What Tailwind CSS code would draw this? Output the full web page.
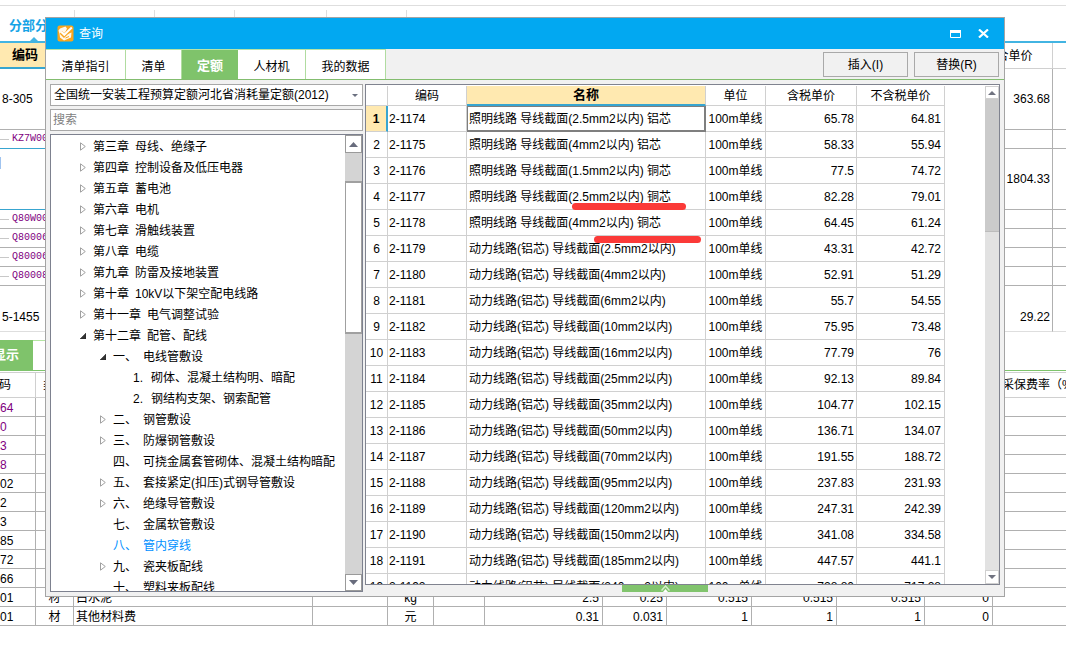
<!DOCTYPE html>
<html lang="zh-CN">
<head>
<meta charset="utf-8">
<meta name="viewport" content="width=device-width, initial-scale=1">
<title>查询</title>
<script src="https://cdn.jsdelivr.net/npm/@tailwindcss/browser@4"></script>
</head>
<body class="relative min-h-screen overflow-hidden bg-white font-['Liberation_Sans','Noto_Sans_CJK_SC',sans-serif] text-[12px] leading-4 text-black">

<!-- Main window: bill of quantities -->
<main class="pt-[5px]">
  <nav class="flex h-[36px] items-start border-t border-[#dedede] pt-1">
    <a href="#" class="relative w-[75px] border-r border-[#dedede] pt-[6px] pb-2 pl-[9px] text-[13px] leading-5 font-bold whitespace-nowrap text-[#14a3e6]">分部分项
      <svg class="absolute top-[27px] left-[30px] h-1 w-2" viewBox="0 0 8 4" aria-hidden="true"><path d="M0 4L4 0L8 4Z" fill="#42b4e2"/></svg>
    </a>
    <span class="h-8 w-20 border-r border-[#dedede]"></span>
    <span class="h-8 w-20 border-r border-[#dedede]"></span>
    <span class="h-8 w-[92px] border-r border-[#dedede]"></span>
    <span class="h-8 w-20 border-r border-[#dedede]"></span>
  </nav>

  <table class="w-full table-fixed border-separate border-spacing-0 border-t-2 border-[#42b4e2]">
    <colgroup><col class="w-[200px]"><col><col class="w-[88px]"><col class="w-[13px]"></colgroup>
    <thead>
      <tr class="h-[26px]">
        <th class="border-b-2 border-[#36a5d0] bg-[#ffe9b0] pl-3 text-left text-[13px] font-bold">编码</th>
        <th class="border-b border-[#d0d0d0]"></th>
        <th class="border-r border-b border-[#d0d0d0] font-normal">综合单价</th>
        <th class="border-b border-[#d0d0d0]"></th>
      </tr>
    </thead>
    <tbody id="bill"></tbody>
  </table>

  <div class="flex h-[39px] items-end border-b border-[#7ec46c] pt-2">
    <button type="button" class="h-[30px] w-[33px] overflow-hidden bg-[#7fc36b] font-bold whitespace-nowrap text-white"><span class="flex justify-end pr-[14px] text-[13px]">显示</span></button>
    <span class="h-[30px] w-[60px] border-t border-[#b4e5a2]"></span>
  </div>

  <table class="mt-px w-full table-fixed border-separate border-spacing-0 border-t border-[#d0d0d0]">
    <colgroup><col class="w-[36px]"><col class="w-[38px]"><col class="w-[239px]"><col class="w-[75px]"><col class="w-[46px]"><col class="w-[51px]"><col class="w-[118px]"><col class="w-[64px]"><col class="w-[85px]"><col class="w-[85px]"><col class="w-[88px]"><col class="w-[68px]"><col></colgroup>
    <thead>
      <tr class="h-[25px] whitespace-nowrap">
        <th class="border-r border-b border-[#d0d0d0] font-normal"><span class="flex justify-end pr-6">编码</span></th>
        <th class="border-b border-[#d0d0d0] font-normal">类别</th>
        <th colspan="10" class="border-b border-[#d0d0d0]"></th>
        <th class="overflow-hidden border-b border-[#d0d0d0] pl-[9px] text-left font-normal">采保费率（%）</th>
      </tr>
    </thead>
    <tbody id="materials"></tbody>
  </table>
</main>

<!-- Query dialog floating over the main window -->
<section role="dialog" aria-labelledby="dlg-title" class="absolute top-[17px] right-[61px] bottom-[52px] left-[45px] flex flex-col border border-[#a4a4a4] bg-[#f1f1f1]">
  <header class="flex h-[31px] shrink-0 items-center bg-[#02a8f1] pr-[14px] pl-[11px] text-white">
    <svg class="h-[17px] w-[17px]" viewBox="0 0 17 17" aria-hidden="true">
      <rect x=".5" y=".5" width="16" height="16" rx="2" fill="#f9a51c"/>
      <path d="M1.500 5.500L3 3.500L8.500 1.500L10 3.500L8.500 7L10.500 9L14.500 7.500L14 12.500L7 15.500L3 12.500L2.500 9Z" fill="#fff8ea"/>
      <path d="M4 7.500L7 10.500L15 3" fill="none" stroke="#f9a51c" stroke-width="3.600"/>
      <path d="M4.300 7L7.300 9.800L14.800 2.500" fill="none" stroke="#fff" stroke-width="2"/>
      <path d="M8.500 13L12 11.500" stroke="#f9a51c" stroke-width="1"/>
    </svg>
    <h1 id="dlg-title" class="ml-[5px]">查询</h1>
    <button type="button" aria-label="最大化" class="mr-[17px] ml-auto">
      <svg class="block h-2 w-[11px]" viewBox="0 0 11 8" aria-hidden="true"><path d="M.5 .5H10.500V7.500H.5Z" fill="none" stroke="#fff"/><path d="M0 0H11V3H0Z" fill="#fff"/></svg>
    </button>
    <button type="button" aria-label="关闭" class="mr-px">
      <svg class="block h-[9px] w-[11px]" viewBox="0 0 11 9" aria-hidden="true"><path d="M1 .5L10 8.500M10 .5L1 8.500" stroke="#fff" stroke-width="2.200"/></svg>
    </button>
  </header>

  <div class="flex h-[31px] shrink-0 border-b border-[#83bd6f]">
    <div role="tablist" class="flex border-t border-[#b7e3a6]">
      <button type="button" role="tab" class="w-20 border-r border-[#b0dca0] bg-white pt-1">清单指引</button>
      <button type="button" role="tab" class="w-14 border-r border-[#b0dca0] bg-white pt-1">清单</button>
      <button type="button" role="tab" aria-selected="true" class="w-14 bg-[#7fc36b] pt-[2px] text-[13px] font-bold text-white">定额</button>
      <button type="button" role="tab" class="w-[68px] border-r border-[#b0dca0] bg-white pt-1">人材机</button>
      <button type="button" role="tab" class="w-20 border-r border-[#b0dca0] bg-white pt-1">我的数据</button>
    </div>
    <div class="ml-auto flex gap-[6px] pt-[3px] pr-[5px] pb-[2px]">
      <button type="button" class="w-[85px] border border-[#a9a9a9]">插入(I)</button>
      <button type="button" class="w-[85px] border border-[#a9a9a9]">替换(R)</button>
    </div>
  </div>

  <div class="flex min-h-0 flex-1 gap-[2px] pt-1 pr-1 pl-1">
    <aside class="flex w-[313px] shrink-0 flex-col gap-[3px] pb-1">
      <div class="relative">
        <select aria-label="定额库" class="block h-[22px] w-full appearance-none rounded-none border border-[#a8a8a8] bg-white pl-[3px]">
          <option>全国统一安装工程预算定额河北省消耗量定额(2012)</option>
        </select>
        <svg class="pointer-events-none absolute top-[10px] right-[5px] h-[3px] w-[6px]" viewBox="0 0 6 3" aria-hidden="true"><path d="M0 0H6L3 3Z" fill="#6b7080"/></svg>
      </div>
      <input type="text" aria-label="搜索" placeholder="搜索" class="h-[22px] w-full border border-[#a8a8a8] bg-white px-[2px] placeholder:text-[#808080]">
      <div class="flex min-h-0 flex-1 overflow-hidden border border-[#7d818f] bg-white">
        <ul id="tree" role="tree" class="min-w-0 flex-1 overflow-hidden pt-[1px]"></ul>
        <div class="flex w-[17px] flex-col bg-[#d4d4d4]">
          <button type="button" aria-label="向上" class="flex h-[18px] items-center justify-center border border-[#9a9a9a] bg-white"><svg class="h-[5px] w-[9px]" viewBox="0 0 9 5" aria-hidden="true"><path d="M0 5L4.500 0L9 5Z" fill="#686c7d"/></svg></button>
          <div class="min-h-0 flex-1 pt-7"><div class="h-[153px] border border-t-2 border-b-2 border-[#a0a0a0] bg-white"></div></div>
          <button type="button" aria-label="向下" class="flex h-[17px] items-center justify-center border border-[#9a9a9a] bg-white"><svg class="h-[5px] w-[9px]" viewBox="0 0 9 5" aria-hidden="true"><path d="M0 0L4.500 5L9 0Z" fill="#686c7d"/></svg></button>
        </div>
      </div>
    </aside>

    <div class="flex min-w-0 flex-1 flex-col">
      <div class="relative flex min-h-0 flex-1 overflow-hidden border border-[#80838f] bg-white pt-px">
        <div class="min-w-0 flex-1 overflow-hidden">
          <table class="w-[579px] table-fixed border-separate border-spacing-0">
            <colgroup><col class="w-[22px]"><col class="w-[79px]"><col class="w-[239px]"><col class="w-[60px]"><col class="w-[91px]"><col class="w-[88px]"></colgroup>
            <thead>
              <tr class="h-5">
                <th class="border-r border-b border-[#d0d0d0]"></th>
                <th class="border-r border-b border-[#d0d0d0] font-normal">编码</th>
                <th class="border-r border-b-2 border-r-[#d0d0d0] border-b-[#38a5d0] bg-[#ffe9b0] text-[13px] font-bold">名称</th>
                <th class="border-r border-b border-[#d0d0d0] font-normal">单位</th>
                <th class="border-r border-b border-[#d0d0d0] font-normal">含税单价</th>
                <th class="border-r border-b border-[#d0d0d0] font-normal">不含税单价</th>
              </tr>
            </thead>
            <tbody id="quotas"></tbody>
          </table>
        </div>
        <div class="flex w-[14px] shrink-0 flex-col bg-[#e2e2e2]">
          <button type="button" aria-label="向上" class="flex h-[13px] items-center justify-center border border-[#d0d0d0] bg-white"><svg class="h-[4px] w-2" viewBox="0 0 8 4" aria-hidden="true"><path d="M0 4L4 0L8 4Z" fill="#707380"/></svg></button>
          <div class="min-h-0 flex-1"><div class="h-[133px] border-b border-[#bcbcbc] bg-[#cbcbcb]"></div></div>
          <button type="button" aria-label="向下" class="flex h-[14px] items-center justify-center border border-[#d0d0d0] bg-white"><svg class="h-[4px] w-2" viewBox="0 0 8 4" aria-hidden="true"><path d="M0 0L4 4L8 0Z" fill="#707380"/></svg></button>
        </div>
        <!-- red marker strokes drawn over the rows -->
        <span class="absolute top-[118px] left-[206px] h-[7px] w-[114px] rounded-full bg-[#fb3a38]"></span>
        <span class="absolute top-[151px] left-[228px] h-[7px] w-[107px] rounded-full bg-[#fb3a38]"></span>
      </div>
      <div class="flex h-[11px] justify-center pr-[35px]">
        <button type="button" aria-label="展开" class="flex h-[7px] w-[86px] items-center justify-center bg-[#81c46d]"><svg class="h-[7px] w-[9px]" viewBox="0 0 9 7" aria-hidden="true"><path d="M.5 5.500L4.500 1L8.500 5.500" fill="none" stroke="#d4eecb" stroke-width="1.500"/><path d="M2 7L4.500 4L7 7Z" fill="#fff"/></svg></button>
      </div>
    </div>
  </div>
</section>

<script>
const CLOSED = '<svg class="h-[9px] w-[6px]" viewBox="0 0 6 9" aria-hidden="true"><path d="M.5 .8L5.300 4.500L.5 8.200Z" fill="#fff" stroke="#a0a0a0"/></svg>';
const OPEN = '<svg class="h-[6px] w-[6px]" viewBox="0 0 6 6" aria-hidden="true"><path d="M0 6H6V0Z" fill="#333" stroke="#222" stroke-width=".5"/></svg>';
const PAD = ['pl-[28px]', 'pl-[48px]', 'pl-[68px]'];

// [depth, state, number, title]
const tree = [
  [0, 'c', '第三章', '母线、绝缘子'], [0, 'c', '第四章', '控制设备及低压电器'], [0, 'c', '第五章', '蓄电池'],
  [0, 'c', '第六章', '电机'], [0, 'c', '第七章', '滑触线装置'], [0, 'c', '第八章', '电缆'],
  [0, 'c', '第九章', '防雷及接地装置'], [0, 'c', '第十章', '10kV以下架空配电线路'], [0, 'c', '第十一章', '电气调整试验'],
  [0, 'o', '第十二章', '配管、配线'], [1, 'o', '一、', '电线管敷设'],
  [2, '', '1.', '砌体、混凝土结构明、暗配'], [2, '', '2.', '钢结构支架、钢索配管'],
  [1, 'c', '二、', '钢管敷设'], [1, 'c', '三、', '防爆钢管敷设'], [1, '', '四、', '可挠金属套管砌体、混凝土结构暗配'],
  [1, 'c', '五、', '套接紧定(扣压)式钢导管敷设'], [1, 'c', '六、', '绝缘导管敷设'], [1, '', '七、', '金属软管敷设'],
  [1, 's', '八、', '管内穿线'], [1, 'c', '九、', '瓷夹板配线'], [1, '', '十、', '塑料夹板配线']
];
document.getElementById('tree').innerHTML = tree.map(([d, s, n, t]) =>
  `<li role="treeitem" class="flex h-[21px] items-center whitespace-nowrap ${PAD[d]} ${s === 's' ? 'text-[#0090ff]' : ''}">` +
  `<span class="flex w-[14px] shrink-0 items-center pl-px">${s === 'c' ? CLOSED : s === 'o' ? OPEN : ''}</span>` +
  `<span class="flex gap-[6px]"><span class="${d === 2 ? 'w-3' : ''}">${n}</span><span>${t}</span></span></li>`).join('');

const L = '照明线路 导线截面', P = '动力线路(铝芯) 导线截面';
const quotas = [
  [L + '(2.5mm2以内) 铝芯', '65.78', '64.81'], [L + '(4mm2以内) 铝芯', '58.33', '55.94'],
  [L + '(1.5mm2以内) 铜芯', '77.5', '74.72'], [L + '(2.5mm2以内) 铜芯', '82.28', '79.01'],
  [L + '(4mm2以内) 铜芯', '64.45', '61.24'], [P + '(2.5mm2以内)', '43.31', '42.72'],
  [P + '(4mm2以内)', '52.91', '51.29'], [P + '(6mm2以内)', '55.7', '54.55'],
  [P + '(10mm2以内)', '75.95', '73.48'], [P + '(16mm2以内)', '77.79', '76'],
  [P + '(25mm2以内)', '92.13', '89.84'], [P + '(35mm2以内)', '104.77', '102.15'],
  [P + '(50mm2以内)', '136.71', '134.07'], [P + '(70mm2以内)', '191.55', '188.72'],
  [P + '(95mm2以内)', '237.83', '231.93'], [P + '(120mm2以内)', '247.31', '242.39'],
  [P + '(150mm2以内)', '341.08', '334.58'], [P + '(185mm2以内)', '447.57', '441.1'],
  [P + '(240mm2以内)', '728.80', '717.28']
];
document.getElementById('quotas').innerHTML = quotas.map(([name, a, b], i) => {
  const first = i === 0;
  return `<tr class="h-[26px] whitespace-nowrap">` +
    `<td class="border-b border-b-[#d0d0d0] text-center ${first ? 'border-r-2 border-r-[#38a5d0] bg-[#ffe9b0] font-bold' : 'border-r border-r-[#d0d0d0]'}">${i + 1}</td>` +
    `<td class="border-r border-b border-[#d0d0d0] pl-[1px]">2-${1174 + i}</td>` +
    `<td class="${first ? 'border border-r-2 border-b-2 border-[#7f7f7f] pl-[1px]' : 'border-r border-b border-[#d0d0d0] pl-[2px]'}">${name}</td>` +
    `<td class="border-r border-b border-[#d0d0d0] text-center">100m单线</td>` +
    `<td class="border-r border-b border-[#d0d0d0] pr-[2px] text-right">${a}</td>` +
    `<td class="border-r border-b border-[#d0d0d0] pr-[3px] text-right">${b}</td></tr>`;
}).join('');

// [row height class, kind, code, price, bottom border class]
const bill = [
  ['h-[61px]', 'n', '8-305', '363.68', 'border-[#b0b0b0]'],
  ['h-[19px]', 'm', 'KZ7W00', '', 'border-[#38a5d0]'],
  ['h-[61px]', 'a', '', '1804.33', 'border-[#38a5d0]'],
  ['h-[19px]', 'm', 'Q80W00', '', 'border-[#b0b0b0]'],
  ['h-[19px]', 'm', 'Q80006', '', 'border-[#b0b0b0]'],
  ['h-[19px]', 'm', 'Q80006', '', 'border-[#b0b0b0]'],
  ['h-[19px]', 'm', 'Q80008', '', 'border-[#b0b0b0]'],
  ['h-[46px]', 'n', '5-1455', '29.22', 'border-[#dedede]']
];
document.getElementById('bill').innerHTML = bill.map(([h, k, c, p, b], i) => {
  const low = i === 7 ? 'pt-4' : '';
  const code = k === 'm'
    ? `<span class="flex items-center gap-[3px] font-['Liberation_Mono',monospace] text-[10px] text-[#800080]"><span class="h-px w-[9px] bg-[#c8c8c8]"></span>${c}</span>`
    : k === 'a' ? '<span class="mb-8 block h-3 w-px bg-[#9fc3ef]"></span>' : `<span class="pl-[2px]">${c}</span>`;
  const edge = i === 7 ? 'border-[#dedede]' : 'border-[#b0b0b0]';
  return `<tr class="${h}"><td class="border-b ${b} ${low}">${code}</td><td class="border-b ${edge}"></td>` +
    `<td class="border-r border-b border-r-[#b0b0b0] ${i === 7 ? 'border-b-[#dedede]' : 'border-b-[#b0b0b0]'} pr-[2px] text-right ${low}">${p}</td><td class="border-b ${edge}"></td></tr>`;
}).join('');

const codes = ['64', '0', '3', '8', '02', '2', '3', '85', '72', '66', '01', '01'];
const tail = {
  10: ['材', '白水泥', '', 'kg', '', '2.5', '0.25', '0.515', '0.515', '0.515', '0'],
  11: ['材', '其他材料费', '', '元', '', '0.31', '0.031', '1', '1', '1', '0']
};
const align = ['text-center', 'pl-[2px]', '', 'text-center', '', 'pr-[3px] text-right', 'pr-[3px] text-right', 'pr-[3px] text-right', 'pr-[3px] text-right', 'pr-[3px] text-right', 'pr-[3px] text-right'];
document.getElementById('materials').innerHTML = codes.map((c, i) => {
  const cells = tail[i] || Array(11).fill('');
  return `<tr class="h-[19px]"><td class="border-r border-b border-[#b0b0b0] pt-px ${i < 4 ? 'text-[#800080]' : ''}">${c}</td>` +
    cells.map((v, j) => `<td class="border-r border-b border-[#b0b0b0] pt-px ${align[j]}">${v}</td>`).join('') +
    `<td class="border-b border-[#b0b0b0]"></td></tr>`;
}).join('');
</script>
</body>
</html>
